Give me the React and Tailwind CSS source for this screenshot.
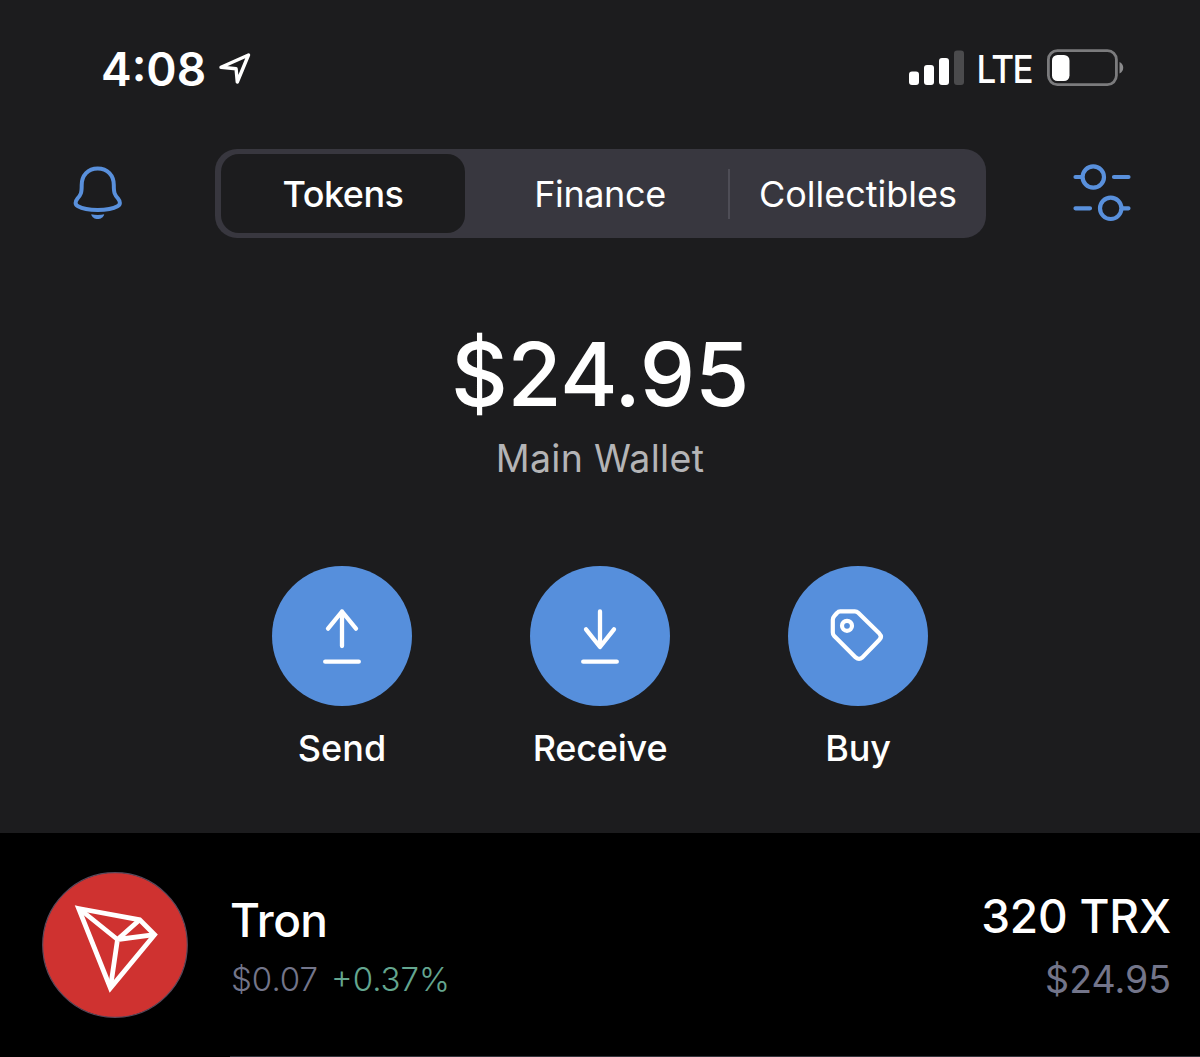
import React, { useState } from 'react';

const tabs = [
  { name: 'Tokens', button: 'w-[244px]', label: 'font-medium tracking-[-0.5px]' },
  { name: 'Finance', button: 'w-[263px] pl-[7px]', label: 'tracking-[-0.4px]' },
  { name: 'Collectibles', button: 'w-[250px] pl-[6px]', label: '' },
];

const LocationIcon = () => (
  <svg width="34" height="34" viewBox="0 0 34 34" fill="none" stroke="#fff" strokeWidth="3.4" strokeLinejoin="round">
    <path d="M3 16.3 L30.5 4 L19.3 31 L18.1 17.8 Z" />
  </svg>
);

const SignalIcon = () => (
  <svg width="56" height="36" viewBox="0 0 56 36" fill="#fff">
    <rect x="0" y="21.5" width="10" height="13.5" rx="3" />
    <rect x="15" y="15" width="10" height="20" rx="3" />
    <rect x="30" y="8" width="10" height="27" rx="3" />
    <rect x="45" y="0.5" width="10" height="34.5" rx="3" fill="#4b4b4d" />
  </svg>
);

const BatteryIcon = () => (
  <svg width="78" height="38" viewBox="0 0 78 38" fill="none">
    <rect x="1.4" y="1.6" width="68" height="34" rx="9" stroke="#7b7b7d" strokeWidth="2.8" />
    <rect x="5" y="6" width="17.5" height="26" rx="5.5" fill="#fff" />
    <path d="M72.5 13 C77.5 15.5 77.5 22 72.5 24.5 Z" fill="#8a8a8c" />
  </svg>
);

const BellIcon = () => (
  <svg width="50" height="58" viewBox="0 0 50 58" fill="none">
    <path
      d="M24.7 3.5 C15 3.5 8.7 10.5 8.7 20 C8.7 28 8 29.5 4.5 33.5 C2 36.5 1.8 39.5 5 41.3 C9 43.6 17 45 24.7 45 C32.5 45 40.5 43.6 44.5 41.3 C47.7 39.5 47.5 36.5 45 33.5 C41.5 29.5 40.8 28 40.8 20 C40.8 10.5 34.5 3.5 24.7 3.5 Z"
      stroke="#5990dc"
      strokeWidth="4"
      strokeLinejoin="round"
    />
    <path d="M18.2 49.3 C22 50.2 27.5 50.2 31.2 49.3 C30 55.7 19.5 55.7 18.2 49.3 Z" fill="#5990dc" />
  </svg>
);

const SlidersIcon = () => (
  <svg width="58" height="62" viewBox="0 0 58 62" fill="none" stroke="#5990dc" strokeWidth="4.2" strokeLinecap="round">
    <circle cx="20.3" cy="14" r="10.7" />
    <path d="M2.5 14 H9 M41 14 H55.5 M2.5 45.3 H17 M49 45.3 H55.5" />
    <circle cx="37.7" cy="45.3" r="10.7" />
  </svg>
);

const SendIcon = () => (
  <svg width="60" height="60" viewBox="0 0 60 60" fill="none" stroke="#fff" strokeWidth="4.3" strokeLinecap="round" strokeLinejoin="round">
    <path d="M30 40 V5.5 M16 22.7 L30 5.5 L44 22.7 M13.2 55.7 H46.8" />
  </svg>
);

const ReceiveIcon = () => (
  <svg width="60" height="60" viewBox="0 0 60 60" fill="none" stroke="#fff" strokeWidth="4.3" strokeLinecap="round" strokeLinejoin="round">
    <path d="M30 5.5 V40 M16 23.3 L30 41 L44 23.3 M13.2 55.7 H46.8" />
  </svg>
);

const TagIcon = () => (
  <svg width="60" height="60" viewBox="0 0 60 60" fill="none" stroke="#fff" strokeWidth="4.2" strokeLinejoin="round">
    <path d="M12.2 5.3 H26.8 Q28.8 5.3 30.2 6.7 L51.4 27.6 Q54.4 30.7 51.4 33.8 L34.4 51.4 Q31 54.4 27.7 51.4 L6 29.7 Q4.8 28.2 4.8 26.2 V13.7 Q4.8 11.7 6.2 10.2 L9 7 Q10.4 5.3 12.2 5.3 Z" />
    <circle cx="19" cy="19.8" r="5" />
  </svg>
);

const TronLogo = () => (
  <svg width="146" height="146" viewBox="0 0 146 146" fill="none">
    <circle cx="73" cy="73" r="72.3" fill="#cf3230" stroke="#5b4a5c" strokeWidth="1.2" />
    <g stroke="#fff" strokeWidth="4.8">
      <path d="M36.6 36.5 L97.7 47.8 L112.6 62.7 L68.4 116 Z" strokeMiterlimit="3" />
      <path d="M37 36.5 L75.5 67.5 L68.4 116 M97.7 47.8 L75.5 67.5 L112.6 62.7" strokeLinejoin="round" />
    </g>
  </svg>
);

const actions = [
  { name: 'Send', icon: <SendIcon />, label: '' },
  { name: 'Receive', icon: <ReceiveIcon />, label: 'tracking-[-0.2px]' },
  { name: 'Buy', icon: <TagIcon />, label: 'tracking-[-0.2px]' },
];

const StatusBar = () => (
  <div className="mt-[38px] flex h-[60px] items-center justify-between pl-[101px] pr-[75px]">
    <div className="flex items-center gap-[12px]">
      <span className="mt-px text-[46px] font-semibold leading-none">4:08</span>
      <LocationIcon />
    </div>
    <div className="flex items-center">
      <SignalIcon />
      {/* condensed a little, like the system font */}
      <span className="ml-[6px] mr-[15px] mt-[2px] origin-right scale-x-[0.91] text-[38.5px] font-medium leading-none tracking-[-1.8px]">
        LTE
      </span>
      <BatteryIcon />
    </div>
  </div>
);

const App = () => {
  const [active, setActive] = useState('Tokens');

  return (
    <div className="flex h-[1057px] w-[1200px] flex-col overflow-hidden bg-black font-['Inter',sans-serif] text-white">
      <header className="flex h-[833px] shrink-0 flex-col bg-[#1c1c1e]">
        <StatusBar />

        {/* Navigation */}
        <nav className="mt-[51px] flex h-[89px] items-center pl-[73px]">
          <button className="w-[142px]">
            <BellIcon />
          </button>
          <div className="flex h-[89px] w-[771px] items-center rounded-[22px] bg-[#38373f] pl-[6px]">
            {tabs.map((tab, index) => (
              <React.Fragment key={tab.name}>
                {index === 2 && <span className="h-[50px] w-[2px] bg-[#4e4d56]" />}
                <button
                  onClick={() => setActive(tab.name)}
                  className={`flex h-[79px] items-center justify-center rounded-[18px] text-[36px] leading-none ${tab.button} ${
                    active === tab.name ? 'bg-[#1c1c1e]' : ''
                  }`}
                >
                  <span className={tab.label}>{tab.name}</span>
                </button>
              </React.Fragment>
            ))}
          </div>
          <button className="ml-[87px]">
            <SlidersIcon />
          </button>
        </nav>

        {/* Balance */}
        <div className="mt-[92px] flex flex-col items-center">
          <h1 className="text-[88px] font-medium leading-[88px] tracking-[-0.4px]">$24.95</h1>
          <p className="mt-[19px] text-[37.5px] leading-[44px] tracking-[0.3px] text-[#b4b4b6]">Main Wallet</p>
        </div>

        {/* Actions */}
        <div className="mt-[85px] flex justify-center gap-[118px]">
          {actions.map((action) => (
            <button key={action.name} className="flex w-[140px] flex-col items-center">
              <span className="flex h-[140px] w-[140px] items-center justify-center rounded-full bg-[#568fdc]">
                {action.icon}
              </span>
              <span className={`mt-[20px] text-[36px] font-medium leading-[44px] ${action.label}`}>{action.name}</span>
            </button>
          ))}
        </div>
      </header>

      {/* Token row */}
      <main className="flex h-[224px] pl-[42px]">
        <div className="pt-[39px]">
          <TronLogo />
        </div>
        <div className="ml-[42px] flex grow justify-between border-b border-[#35353d] pr-[29px]">
          <div className="flex flex-col pt-[62px]">
            <span className="text-[46px] font-medium leading-[50px] tracking-[-0.6px]">Tron</span>
            <span className="mt-[14px] flex gap-[13px] pl-px text-[33px] font-light leading-[40px]">
              <span className="text-[#73758a]">$0.07</span>
              <span className="text-[#64a68f]">+0.37%</span>
            </span>
          </div>
          <div className="flex flex-col items-end pt-[58px]">
            <span className="text-[46px] font-medium leading-[50px] tracking-[-0.2px]">320 TRX</span>
            <span className="mt-[19px] text-[37.5px] leading-[40px] text-[#73758a]">$24.95</span>
          </div>
        </div>
      </main>
    </div>
  );
};

export default App;
